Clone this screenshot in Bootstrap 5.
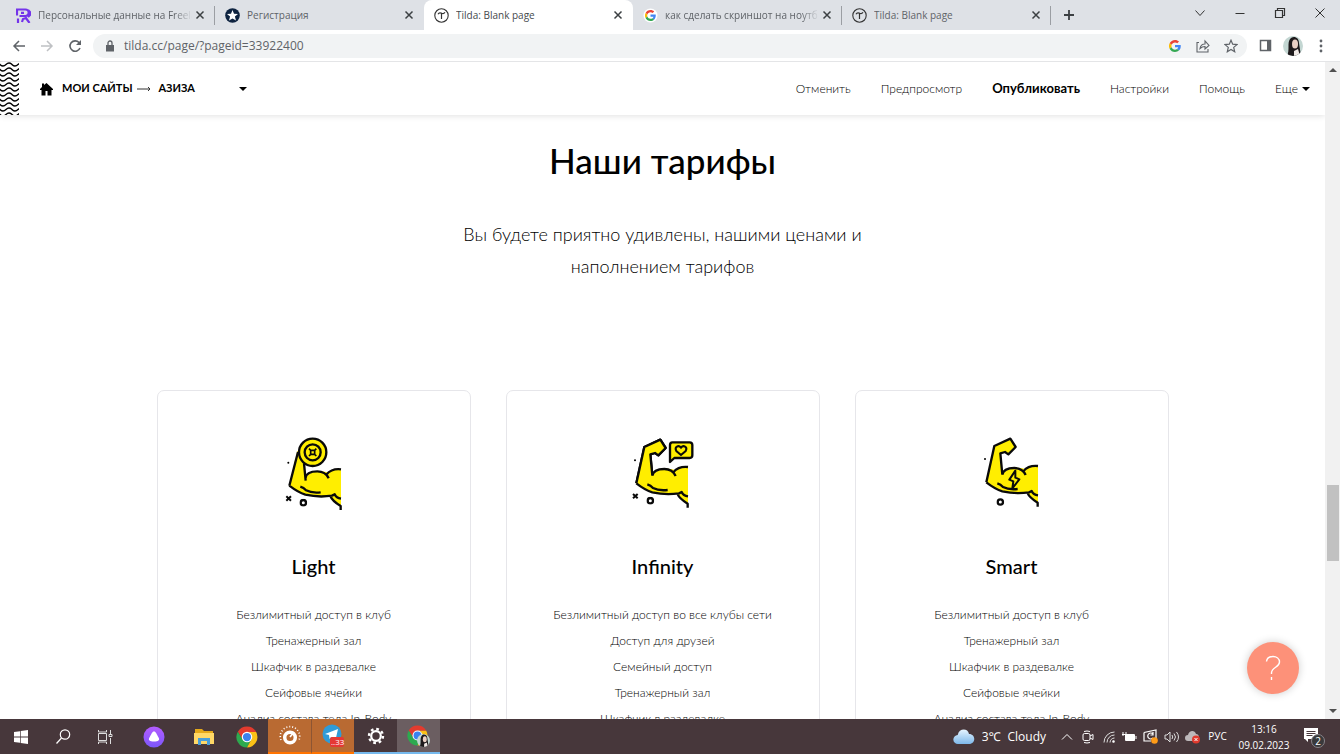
<!DOCTYPE html>
<html lang="ru">
<head>
<meta charset="utf-8">
<meta name="viewport" content="width=device-width, initial-scale=1">
<title>Tilda: Blank page</title>
<link href="https://cdn.jsdelivr.net/npm/bootstrap@5.3.0/dist/css/bootstrap.min.css" rel="stylesheet">
<style>
  body { font-family: "Open Sans", "Noto Sans", sans-serif; color: #000; overflow: hidden; }
  button { border: 0; background: none; padding: 0; color: inherit; font-weight: inherit; }
  svg { display: block; flex: none; }

  /* browser tabs */
  .tab-strip { height: 30px; background: #dee1e6; padding-left: 6px; }
  .tab-item { flex: 0 1 209px; min-width: 0; padding: 0 6px 0 10px; font-size: 10px; color: #5f6368; border-right: 1px solid transparent; }
  .tab-item.divided { border-image: linear-gradient(transparent 7px, #9b9ea3 7px, #9b9ea3 24px, transparent 24px) 1; }
  .tab-item.current { background: #fff; border-radius: 8px 8px 0 0; color: #45494d; }
  .tab-title { color: inherit; text-decoration: none; white-space: nowrap; overflow: hidden; margin-left: 7px; }
  .tab-title.faded { -webkit-mask-image: linear-gradient(to left, transparent, #000 18px); mask-image: linear-gradient(to left, transparent, #000 18px); }
  .tab-close { color: #3c4043; }
  .win-controls { gap: 16px; color: #333; padding-right: 8px; }
  .win-controls button { width: 24px; height: 26px; display: grid; place-items: center; }

  /* address row */
  .tool-row { height: 32px; padding: 0 9px; color: #5f6368; border-bottom: 1px solid #e4e5e7; }
  .tool-row .nav-icon { width: 20px; height: 24px; display: grid; place-items: center; }
  .address { height: 24px; border-radius: 12px; background: #f1f3f4; padding: 0 6px 0 11px; }
  .address input { background: none; border: 0; outline: 0; padding: 0; font-size: 12px; color: #5f6368; min-width: 0; }

  /* Tilda editor */
  .editor { font-family: Lato, "Open Sans", sans-serif; }
  .editor-bar { height: 53px; box-shadow: 0 1px 6px rgba(0,0,0,.12); position: relative; z-index: 1; }
  .crumbs { font-size: 11px; font-weight: 700; padding-left: 21px; }
  .crumbs .home { gap: 9px; }
  .crumbs a, .menu-links a, .menu-links button { color: #000; text-decoration: none; }
  .crumbs button { margin-left: 44px; }
  .menu-links { gap: 30px; font-size: 12px; font-weight: 300; padding-right: 15px; }
  .menu-links .publish { font-size: 13px; font-weight: 700; }
  .caret-down { display: block; border: 4px solid transparent; border-top-color: #000; border-bottom: 0; }

  .pricing { padding-top: 24px; }
  .pricing h1 { font-size: 35px; line-height: 42px; font-weight: 500; margin: 0 0 37px; }
  .pricing .intro { font-size: 18px; line-height: 32px; font-weight: 300; max-width: 430px; margin: 0 auto 108px; }
  .plans { display: grid; grid-template-columns: repeat(3, 1fr); gap: 35px; max-width: 1012px; }
  .plan { border: 1px solid #e6e6ea; border-radius: 7px; padding: 34px 20px 40px; }
  .plan h2 { font-size: 20px; line-height: 30px; font-weight: 500; margin: 30px 0 21px; }
  .plan li { font-size: 12px; line-height: 26px; font-weight: 300; }

  .help-button { position: absolute; right: 26px; bottom: 25px; width: 52px; height: 52px; border-radius: 50%; background: #fd9179; display: grid; place-items: center; box-shadow: 0 0 8px rgba(0,0,0,.2); }

  .scroll-rail { width: 15px; background: #f1f1f1; padding: 6px 0; }
  .scroll-thumb { width: 12px; height: 76px; background: #c1c1c1; }
  .rail-space-top { flex: 413 1 0; } .rail-space-bottom { flex: 148 1 0; }
  .arrow-tip { border: 4px solid transparent; }
  .arrow-tip.up { border-bottom-color: #505050; border-top: 0; }
  .arrow-tip.down { border-top-color: #505050; border-bottom: 0; }

  /* taskbar */
  .task-row { height: 35px; background: #47373b; color: #fff; }
  .task-row button { display: grid; place-items: center; width: 43px; }
  .task-row .slim { width: 42px; } .task-row .wide { width: 56px; }
  .task-row .alert-app { background: #b96a32; border-bottom: 2px solid #ff7300; }
  .task-row .alert-app + .alert-app { border-left: 1px solid #8d5533; }
  .task-row .open-app { border-bottom: 2px solid #76b9ed; }
  .task-row .focused { background: #6b5e61; }
  .task-row .tray { width: 21px; }
  .task-row .lang { width: 29px; font-size: 10px; }
  .task-row .clock { width: 64px; font-size: 10px; line-height: 16px; }
  .task-row .notice { width: 36px; margin-right: 8px; }
  .weather { font-size: 12px; gap: 7px; margin-right: 10px; }
</style>
</head>
<body>
<svg width="0" height="0" class="position-absolute" aria-hidden="true">
  <defs>
    <symbol id="g-logo" viewBox="0 0 48 48">
      <path fill="#ea4335" d="M24 9.500c3.500 0 6.700 1.200 9.200 3.600l6.900-6.900C35.900 2.400 30.500 0 24 0 14.600 0 6.500 5.400 2.600 13.200l8 6.200C12.400 13.700 17.700 9.500 24 9.500z"/>
      <path fill="#4285f4" d="M47 24.500c0-1.600-.2-3.100-.4-4.500H24v9h12.900c-.6 3-2.300 5.500-4.800 7.200l7.700 6C44.400 38 47 31.800 47 24.500z"/>
      <path fill="#fbbc05" d="M10.500 28.600A14.500 14.500 0 0 1 10.500 19.400l-8-6.200a24 24 0 0 0 0 21.600z"/>
      <path fill="#34a853" d="M24 48c6.500 0 11.900-2.100 15.900-5.800l-7.700-6c-2.200 1.500-4.900 2.300-8.200 2.300-6.300 0-11.600-4.200-13.500-9.900l-8 6.200C6.500 42.600 14.600 48 24 48z"/>
    </symbol>
    <symbol id="chrome-logo" viewBox="0 0 48 48">
      <path fill="#e33b2e" d="M24 13h20a23 23 0 0 0-40-.5L14.500 30z"/>
      <path fill="#2da94f" d="M4 12.500A23 23 0 0 0 24 47l9.500-17.500L24 35a11 11 0 0 1-9.500-5.500z"/>
      <path fill="#fbc116" d="M44 13H24a11 11 0 0 1 9.500 16.500L24 47A23 23 0 0 0 44 13z"/>
      <circle cx="24" cy="24" r="11.500" fill="#fff"/><circle cx="24" cy="24" r="9" fill="#3b82ee"/>
    </symbol>
    <symbol id="portrait" viewBox="0 0 20 20">
      <clipPath id="round"><circle cx="10" cy="10" r="10"/></clipPath>
      <g clip-path="url(#round)"><path fill="#c3d6d2" d="M0 0h20v20H0z"/><path fill="#1d191b" d="M7 3c3-4 9-2 9 4l2 13H4C7 14 4 7 7 3z"/><ellipse cx="12" cy="8" rx="3" ry="4.500" fill="#e9cfc4"/><path fill="#f0e9e6" d="m11 15 4-2 2 7h-6z"/></g>
    </symbol>
    <symbol id="tilda-logo" viewBox="0 0 15 15"><circle cx="7.500" cy="7.500" r="6.700" fill="none" stroke="#333" stroke-width="1.100"/><path d="M4 6.200c1-2 2.400-1.400 3.500-1 1.200.5 2.500.6 3.500-1M7.500 5.300V11" fill="none" stroke="#333" stroke-width="1.200"/></symbol>
    <symbol id="cross" viewBox="0 0 16 16"><path d="m4.500 4.500 7 7m0-7-7 7" stroke="currentColor" stroke-width="1.500"/></symbol>
    <symbol id="torso" viewBox="0 0 288 288">
      <path fill="#ffee00" d="M219 126q-24-3-37 10-12-6-34-4-24 2-36 20l-6-64 14-4 10 7 22-22-16-24-48 21-24 109q26 20 48 27 40 9 75 4 12 17 32 30z"/>
      <path fill="none" stroke="#0a0a0a" stroke-width="7" stroke-linejoin="round" d="M112 152c2-12 14-20 36-20 17 0 28 8 34 21M219 126c-22-3-38 7-43 15M64 175q26 20 48 27 40 9 80 3l8-4q5 11 19 13M187 206q6 15 31 30v12M97 178q10 3 17 11 17 9 44 6"/>
    </symbol>
    <symbol id="fist" viewBox="0 0 288 288"><path fill="#ffee00" stroke="#0a0a0a" stroke-width="7" stroke-linejoin="round" d="M112 152 106 88l14-4 10 7 22-22-16-25-48 22-24 109"/></symbol>
    <symbol id="ring-mark" viewBox="0 0 24 24"><circle cx="12" cy="12" r="8" fill="none" stroke="#0a0a0a" stroke-width="7"/></symbol>
  </defs>
</svg>

<div class="d-flex flex-column vh-100">
  <div class="tab-strip d-flex flex-shrink-0">
    <div class="tab-item divided d-flex align-items-center">
      <svg width="15" height="15" viewBox="0 0 15 15" fill="none" stroke="#7434ea" stroke-width="2.200"><path d="M1 7.500V1.500h8.500a3 3 0 0 1 0 6.500H3.500M2 15V10.500M8 4.800H5M6 14l1-3 3-1 3.500 5M12 2l2 2v3l-2 2"/></svg>
      <a href="#" class="tab-title faded flex-grow-1">Персональные данные на Freela</a>
      <button class="tab-close" aria-label="Закрыть"><svg width="16" height="16"><use href="#cross"/></svg></button>
    </div>
    <div class="tab-item d-flex align-items-center">
      <svg width="15" height="15" viewBox="0 0 15 15"><circle cx="7.500" cy="7.500" r="7.300" fill="#0e2340"/><path fill="#fff" d="m7.500 2 1.500 3.800 4 .2-3.100 2.600 1.100 4-3.500-2.200-3.500 2.200 1.100-4L2 6l4-.2z"/></svg>
      <a href="#" class="tab-title flex-grow-1">Регистрация</a>
      <button class="tab-close" aria-label="Закрыть"><svg width="16" height="16"><use href="#cross"/></svg></button>
    </div>
    <div class="tab-item current d-flex align-items-center">
      <svg width="15" height="15"><use href="#tilda-logo"/></svg>
      <a href="#" class="tab-title flex-grow-1">Tilda: Blank page</a>
      <button class="tab-close" aria-label="Закрыть"><svg width="16" height="16"><use href="#cross"/></svg></button>
    </div>
    <div class="tab-item divided d-flex align-items-center">
      <svg width="15" height="15" viewBox="0 0 15 15"><circle cx="7.500" cy="7.500" r="7" fill="#fff"/><use href="#g-logo" x="2" y="2" width="11" height="11"/></svg>
      <a href="#" class="tab-title faded flex-grow-1">как сделать скриншот на ноутб</a>
      <button class="tab-close" aria-label="Закрыть"><svg width="16" height="16"><use href="#cross"/></svg></button>
    </div>
    <div class="tab-item divided d-flex align-items-center">
      <svg width="15" height="15"><use href="#tilda-logo"/></svg>
      <a href="#" class="tab-title flex-grow-1">Tilda: Blank page</a>
      <button class="tab-close" aria-label="Закрыть"><svg width="16" height="16"><use href="#cross"/></svg></button>
    </div>
    <button class="tab-close px-2 ms-1" aria-label="Новая вкладка"><svg width="12" height="12" viewBox="0 0 12 12"><path d="M6 1v10M1 6h10" stroke="currentColor" stroke-width="1.800"/></svg></button>
    <div class="win-controls d-flex ms-auto">
      <button aria-label="Поиск вкладок"><svg width="12" height="12" viewBox="0 0 12 12" fill="none" stroke="currentColor"><path d="m1.500 3.500 4.500 5 4.500-5"/></svg></button>
      <button aria-label="Свернуть"><svg width="12" height="12" viewBox="0 0 12 12" fill="none" stroke="currentColor"><path d="M1.500 6.500h9"/></svg></button>
      <button aria-label="Окно"><svg width="12" height="12" viewBox="0 0 12 12" fill="none" stroke="currentColor" stroke-width="1.200"><path d="M1.500 3.500h7v7h-7zM3.500 3.500v-2h7v7h-2"/></svg></button>
      <button aria-label="Закрыть окно"><svg width="12" height="12" viewBox="0 0 12 12" fill="none" stroke="currentColor"><path d="m1.500 1.500 9 9m0-9-9 9"/></svg></button>
    </div>
  </div>

  <div class="tool-row d-flex align-items-center gap-2 flex-shrink-0">
    <button class="nav-icon" aria-label="Назад"><svg width="14" height="14" viewBox="0 0 14 14" fill="none" stroke="currentColor" stroke-width="1.500"><path d="M13 7H2m5-5L2 7l5 5"/></svg></button>
    <button class="nav-icon" aria-label="Вперёд"><svg width="14" height="14" viewBox="0 0 14 14" fill="none" stroke="#bfc1c4" stroke-width="1.500"><path d="M1 7h11M7 2l5 5-5 5"/></svg></button>
    <button class="nav-icon" aria-label="Обновить"><svg width="14" height="14" viewBox="0 0 14 14" fill="none" stroke="currentColor" stroke-width="1.600"><path d="M12 9A5.200 5.200 0 1 1 11 3.500L12 5"/><path d="M13 1v5H8z" fill="currentColor" stroke="none"/></svg></button>
    <div class="address d-flex align-items-center flex-grow-1 gap-2">
      <svg width="12" height="12" viewBox="0 0 12 12"><path fill="#5f6368" d="M2 5h8v6.500H2z"/><path fill="none" stroke="#5f6368" stroke-width="1.300" d="M4 5V3a2 2 0 0 1 4 0v2"/></svg>
      <input class="flex-grow-1" type="text" aria-label="Адрес" value="tilda.cc/page/?pageid=33922400">
      <svg class="mx-1" width="12" height="12" viewBox="0 0 12 12"><use href="#g-logo" width="12" height="12"/></svg>
      <button class="nav-icon" aria-label="Поделиться"><svg width="14" height="14" viewBox="0 0 14 14" fill="none" stroke="currentColor" stroke-width="1.100"><path d="M3 3.500H1v9.500h11v-3M4 9.500c.5-3 2-4.500 5-4.500V2l4 4.500-4 3.500V7.500C7 7.500 5.500 8 4 9.500z"/></svg></button>
      <button class="nav-icon" aria-label="В закладки"><svg width="14" height="14" viewBox="0 0 14 14" fill="none" stroke="currentColor" stroke-width="1.200"><path d="m7 1.200 1.700 4 4.300.4-3.300 2.800 1 4.300L7 10.400l-3.700 2.300 1-4.300L1 5.600l4.300-.4z"/></svg></button>
    </div>
    <button class="nav-icon" aria-label="Боковая панель"><svg width="13" height="13" viewBox="0 0 13 13"><path d="M1.500 1.500h10v10h-10z" fill="none" stroke="currentColor" stroke-width="1.500"/><path fill="currentColor" d="M8 1h4v11H8z"/></svg></button>
    <button class="nav-icon" aria-label="Профиль"><svg width="20" height="20"><use href="#portrait"/></svg></button>
    <button class="nav-icon" aria-label="Меню"><svg width="4" height="14" viewBox="0 0 4 14" fill="currentColor"><circle cx="2" cy="2" r="1.400"/><circle cx="2" cy="7" r="1.400"/><circle cx="2" cy="12" r="1.400"/></svg></button>
  </div>

  <div class="d-flex flex-grow-1 overflow-hidden">
    <main class="editor flex-grow-1 position-relative overflow-hidden">
      <header class="editor-bar bg-white d-flex align-items-center">
        <svg width="19" height="53" aria-hidden="true">
          <pattern id="waves" width="12" height="5" patternUnits="userSpaceOnUse"><path d="M-3 1c3 0 3 3 6 3s3-3 6-3 3 3 6 3" fill="none" stroke="#000" stroke-width="1.300"/></pattern>
          <rect width="19" height="53" fill="url(#waves)"/>
        </svg>
        <nav class="crumbs d-flex align-items-center">
          <a href="#" class="home d-flex align-items-center"><svg width="13" height="14" viewBox="0 0 13 14"><path d="M6.500 1 13 7v1h-1.500v5.500h-4V9h-2v4.500h-4V8H0V7l2-2V1.500h2V3z"/></svg>МОИ САЙТЫ</a>
          <svg class="ms-1 me-2" width="14" height="8" viewBox="0 0 14 8" fill="none" stroke="#333"><path d="M0 4h13M11 2l2 2-2 2"/></svg>
          <a href="#">АЗИЗА</a>
          <button aria-label="Список страниц"><span class="caret-down"></span></button>
        </nav>
        <nav class="menu-links d-flex align-items-center ms-auto">
          <a href="#">Отменить</a>
          <a href="#">Предпросмотр</a>
          <a href="#" class="publish">Опубликовать</a>
          <a href="#">Настройки</a>
          <a href="#">Помощь</a>
          <button class="d-flex align-items-center gap-1">Еще <span class="caret-down"></span></button>
        </nav>
      </header>

      <section class="pricing text-center">
        <h1>Наши тарифы</h1>
        <p class="intro">Вы будете приятно удивлены, нашими ценами и наполнением тарифов</p>
        <div class="plans mx-auto">
          <article class="plan">
            <svg class="mx-auto" width="96" height="96" viewBox="0 0 288 288">
              <svg viewBox="-6 -7 288 288"><clipPath id="below-plate"><path d="M0 100h288v188H0z"/></clipPath><g clip-path="url(#below-plate)"><use href="#torso" width="288" height="288"/></g><path fill="#ffee00" d="m88 70 20 20 5 70-48 15z"/><path fill="none" stroke="#0a0a0a" stroke-width="7" d="m90 74-26 101M108 108l5 52"/></svg>
              <g stroke="#0a0a0a" stroke-width="7" fill="#ffee00"><circle cx="140" cy="82" r="41"/><circle cx="140" cy="82" r="24"/><path fill="none" stroke-width="5" d="m129 71 5 5h12l5-5M129 93l5-5h12l5 5M134 76v12M146 76v12"/></g>
              <circle cx="67" cy="113" r="3"/><path d="m61 214 14 13m0-13-14 13" stroke="#0a0a0a" stroke-width="6"/><use href="#ring-mark" x="100" y="221" width="24" height="24"/>
            </svg>
            <h2>Light</h2>
            <ul class="list-unstyled mb-0"><li>Безлимитный доступ в клуб</li><li>Тренажерный зал</li><li>Шкафчик в раздевалке</li><li>Сейфовые ячейки</li><li>Анализ состава тела In-Body</li></ul>
          </article>
          <article class="plan">
            <svg class="mx-auto" width="96" height="96" viewBox="0 0 288 288">
              <use href="#fist" width="288" height="288"/><use href="#torso" width="288" height="288"/><use href="#fist" width="288" height="288"/>
              <path fill="#ffee00" stroke="#0a0a0a" stroke-width="7" stroke-linejoin="round" d="M172 52h52q8 0 8 8v31q0 8-8 8h-46l-13 12V60q0-8 7-8z"/><path fill="none" stroke="#0a0a0a" stroke-width="6" d="m198 90-14-12c-7-13 7-19 14-10 7-9 21-3 14 10z"/>
              <circle cx="60" cy="106" r="3"/><path d="m54 207 14 13m0-13-14 13" stroke="#0a0a0a" stroke-width="6"/><use href="#ring-mark" x="94" y="215" width="24" height="24"/>
            </svg>
            <h2>Infinity</h2>
            <ul class="list-unstyled mb-0"><li>Безлимитный доступ во все клубы сети</li><li>Доступ для друзей</li><li>Семейный доступ</li><li>Тренажерный зал</li><li>Шкафчик в раздевалке</li></ul>
          </article>
          <article class="plan">
            <svg class="mx-auto" width="96" height="96" viewBox="0 0 288 288">
              <svg viewBox="-3 3 288 288"><use href="#torso" width="288" height="288"/><use href="#fist" width="288" height="288"/></svg>
              <path fill="#ffee00" stroke="#0a0a0a" stroke-width="6" stroke-linejoin="round" d="m154 137-18 27 12 5-3 21 21-27-12-5z"/>
              <circle cx="63" cy="102" r="3"/><use href="#ring-mark" x="97" y="219" width="24" height="24"/>
            </svg>
            <h2>Smart</h2>
            <ul class="list-unstyled mb-0"><li>Безлимитный доступ в клуб</li><li>Тренажерный зал</li><li>Шкафчик в раздевалке</li><li>Сейфовые ячейки</li><li>Анализ состава тела In-Body</li></ul>
          </article>
        </div>
      </section>
      <button class="help-button" aria-label="Помощь"><svg width="16" height="26" viewBox="0 0 16 26" fill="none" stroke="#fff" stroke-width="1.400"><path d="M1.500 6.500C2 3 4.500 1.500 8 1.500s6.500 2 6.500 5.500c0 5.500-8 5-8 11v1M6.500 22v3"/></svg></button>
    </main>
    <div class="scroll-rail d-flex flex-column align-items-center flex-shrink-0" aria-hidden="true">
      <span class="arrow-tip up"></span><span class="rail-space-top"></span><span class="scroll-thumb"></span><span class="rail-space-bottom"></span><span class="arrow-tip down"></span>
    </div>
  </div>

  <footer class="task-row d-flex align-items-stretch flex-shrink-0">
    <button class="slim" aria-label="Пуск"><svg width="14" height="14" viewBox="0 0 14 14" fill="#fff"><path d="m0 2 6-.8v5.400H0zM6.700 1 14 0v6.600H6.700zM0 7.400h6v5.400L0 12zM6.700 7.400H14V14l-7.300-1z"/></svg></button>
    <button class="slim" aria-label="Поиск"><svg width="15" height="15" viewBox="0 0 15 15" fill="none" stroke="#fff" stroke-width="1.200"><circle cx="9" cy="5.500" r="4.700"/><path d="M5.500 9 .5 14.500"/></svg></button>
    <button class="slim" aria-label="Представление задач"><svg width="16" height="14" viewBox="0 0 16 14" fill="none" stroke="#ddd"><path d="M1.500 3.500h8v7h-8zM1.500 0v2h8V0M1.500 14v-2h8v2M13.500 0v4M13.500 8v6M12 4.500h3v2h-3z"/></svg></button>
    <button class="wide" aria-label="Алиса"><svg width="22" height="22" viewBox="0 0 22 22"><defs><linearGradient id="violet" x2="0" y2="1"><stop stop-color="#b45cff"/><stop offset="1" stop-color="#7b57fb"/></linearGradient></defs><circle cx="11" cy="11" r="10.500" fill="url(#violet)"/><path fill="#fff" d="M11 5.500c1 0 1.600.6 2.100 1.500l2.700 5c1 2-.3 3.500-4.800 3.500s-5.800-1.500-4.800-3.500L8.900 7c.5-.9 1.100-1.500 2.100-1.500z"/></svg></button>
    <button aria-label="Проводник"><svg width="20" height="18" viewBox="0 0 20 18"><path fill="#e5a91a" d="M1 1h7l2 2h9v4H1z"/><path fill="#ffd867" d="M0 5h20v11H0z"/><path fill="#4a9ed8" d="M4 10h12v7h-3v-4H7v4H4z"/></svg></button>
    <button aria-label="Chrome"><svg width="22" height="22"><use href="#chrome-logo"/></svg></button>
    <button class="alert-app" aria-label="Монитор"><svg width="22" height="22" viewBox="0 0 22 22" fill="none" stroke="#fff"><circle cx="11" cy="12.500" r="5.300" stroke-width="3.500"/><path d="m11 12 4-5" stroke-width="1.600"/><path d="M2 15a9.700 9.700 0 1 1 18 0" stroke-dasharray="1 2" stroke-width="1.700"/></svg></button>
    <button class="alert-app" aria-label="Telegram, 33"><svg width="24" height="24" viewBox="0 0 24 24"><circle cx="11" cy="10" r="9.500" fill="#2f9bd7"/><path fill="#fff" d="m4 10 13-5-2.500 11-4-3-2 2-.5-4z"/><rect x="9" y="13" width="14" height="10" rx="2" fill="#e53935"/><text x="10" y="21" font-size="8" fill="#fff">..33</text></svg></button>
    <button class="open-app" aria-label="Параметры"><svg width="18" height="18" viewBox="0 0 18 18" fill="none" stroke="#fff"><circle cx="9" cy="9" r="4.800" stroke-width="2.200"/><circle cx="9" cy="9" r="7" stroke-width="2.400" stroke-dasharray="2.700 2.800"/></svg></button>
    <button class="open-app focused" aria-label="Chrome, профиль"><svg width="24" height="22" viewBox="0 0 24 22"><use href="#chrome-logo" width="21" height="21"/><use href="#portrait" x="10" y="9" width="13" height="13"/></svg></button>

    <div class="weather d-flex align-items-center ms-auto">
      <svg width="22" height="16" viewBox="0 0 22 16"><defs><linearGradient id="sky" x2="0" y2="1"><stop stop-color="#e6f4ff"/><stop offset="1" stop-color="#7db8ea"/></linearGradient></defs><path fill="url(#sky)" d="M5 15a4.500 4.500 0 0 1-.3-9C6-1 15-1 16 5c7 0 7 10 0 10z"/></svg>
      <span>3℃</span><span>Cloudy</span>
    </div>
    <button class="tray" aria-label="Скрытые значки"><svg width="12" height="12" viewBox="0 0 12 12" fill="none" stroke="#fff"><path d="m1 8.500 5-5 5 5"/></svg></button>
    <button class="tray" aria-label="Собрание"><svg width="12" height="14" viewBox="0 0 12 14" fill="none" stroke="#fff"><rect x="1" y="3.500" width="7" height="7" rx="1.500"/><path d="m8 6 3-1.500v5L8 8M2 1.500q3-1 6 0M2 12.500q3 1 6 0"/></svg></button>
    <button class="tray" aria-label="Сеть"><svg width="12" height="12" viewBox="0 0 12 12" fill="none" stroke="#ddd"><path d="M1 11.500A10.500 10.500 0 0 1 11.500 1M4 11.500A7.500 7.500 0 0 1 11.500 4M7 11.500A4.500 4.500 0 0 1 11.500 7"/><circle cx="10.500" cy="10.500" r="1" fill="#fff"/></svg></button>
    <button class="tray" aria-label="Батарея"><svg width="15" height="12" viewBox="0 0 15 12"><path fill="none" stroke="#fff" d="M3.500 3.500h9v6h-9zM14 5v3M1 1v4M4 1v3M0 3.500h4"/><path fill="#fff" d="M4 4h8v5H4z"/></svg></button>
    <button class="tray" aria-label="Обновления"><svg width="15" height="15" viewBox="0 0 15 15"><path fill="none" stroke="#fff" stroke-width="1.200" d="M1 3.500 13 1v8M1 3.500V12h7M10 5a3 3 0 1 0 0 4M10 3v3H7.500"/><circle cx="11.500" cy="11.500" r="3.300" fill="#ff9b17"/></svg></button>
    <button class="tray" aria-label="Громкость"><svg width="15" height="12" viewBox="0 0 15 12" fill="none" stroke="#ddd"><path d="M1 4h2l3-3v10L3 8H1zM8 4q1.500 2 0 4M10 2.500q3 3.500 0 7M12.500 1q4 5 0 10"/></svg></button>
    <button class="tray" aria-label="Облако"><svg width="16" height="14" viewBox="0 0 16 14"><path fill="#bdb8ba" d="M3 11a3 3 0 0 1 0-6c1-5 7-5 8-1 4 0 4 7 0 7z"/><circle cx="11" cy="9.500" r="4" fill="#e03a2e"/><path stroke="#fff" d="m9.500 8 3 3m0-3-3 3"/></svg></button>
    <button class="lang">РУС</button>
    <button class="clock"><span>13:16<br>09.02.2023</span></button>
    <button class="notice" aria-label="Уведомления, 2"><svg width="22" height="22" viewBox="0 0 22 22"><path fill="#fff" d="M1 2h14v11H5v3l-3-3H1z"/><path stroke="#47373b" d="M3.500 5.500h9M3.500 7.500h9M3.500 9.500h6"/><circle cx="15" cy="15" r="6.500" fill="#39393b" stroke="#89858a"/><text x="15" y="19" text-anchor="middle" font-size="10" fill="#fff">2</text></svg></button>
  </footer>
</div>
<script src="https://cdn.jsdelivr.net/npm/bootstrap@5.3.0/dist/js/bootstrap.bundle.min.js"></script>
</body>
</html>
